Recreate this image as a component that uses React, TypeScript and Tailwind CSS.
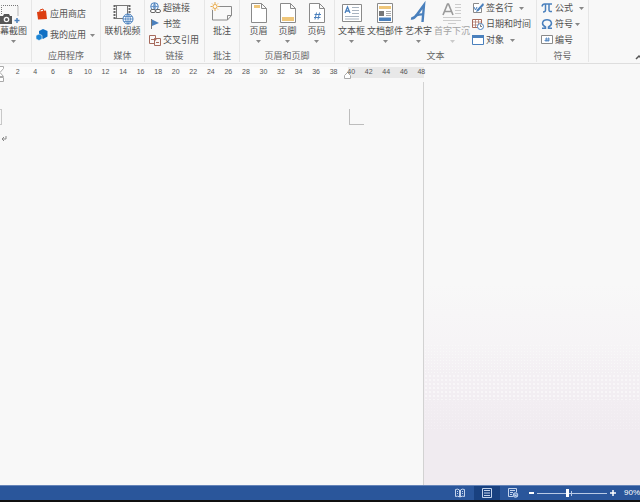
import type { ReactNode } from "react";

const BLUE = "#4a80bd";
const GREY = "#8a8a8a";
const GOLD = "#efc67a";

function Arrow({ className = "" }: { className?: string }) {
  return (
    <svg viewBox="0 0 5 3" className={`h-[3px] w-[5px] shrink-0 ${className}`} aria-hidden="true">
      <path d="M0 0h5L2.5 3z" fill="#888" />
    </svg>
  );
}

function Group({ label, className, children }: { label: string; className: string; children: ReactNode }) {
  return (
    <section aria-label={label} className={`flex h-[62px] shrink-0 flex-col border-r border-[#e6e6e6] ${className}`}>
      <div className="flex h-12 shrink-0 items-start">{children}</div>
      <div className="mt-[2px] h-3 whitespace-nowrap text-center leading-3 text-[#666]">{label}</div>
    </section>
  );
}

function Big({ label, icon, arrow = true, className = "", muted = false }: {
  label: string; icon: ReactNode; arrow?: boolean; className?: string; muted?: boolean;
}) {
  return (
    <button type="button" disabled={muted} className={`flex shrink-0 flex-col items-center pt-[1px] ${muted ? "text-[#a3a3a3]" : ""} ${className}`}>
      <svg viewBox="0 0 24 24" className="h-6 w-6 overflow-visible" fill="none" aria-hidden="true">{icon}</svg>
      <span className="whitespace-nowrap leading-3">{label}</span>
      {arrow && <Arrow className={muted ? "mt-[3px] opacity-40" : "mt-[3px]"} />}
    </button>
  );
}

function Small({ label, icon, arrow = "" }: { label: string; icon: ReactNode; arrow?: string }) {
  return (
    <button type="button" className="flex h-4 items-center gap-[2px] whitespace-nowrap">
      <svg viewBox="0 0 12 12" className="h-3 w-3 shrink-0" fill="none" aria-hidden="true">{icon}</svg>
      <span className="leading-3">{label}</span>
      {arrow && <Arrow className={arrow} />}
    </button>
  );
}

const pageOutline = <path d="M4.500 2.500h10l5 5v14h-15zM14.500 2.500v5h5" fill="#fff" stroke={GREY} />;

const icons = {
  screenshot: (
    <g transform="translate(-2 1)">
      <path d="M1.500 12V3.500h16.500V14" stroke="#777" strokeDasharray="1 1" />
      <path d="M0 14h3l1-2h5l1 2h2v8H0z" fill="#555" />
      <circle cx="6.500" cy="17.500" r="2.800" fill="#f8f8f8" />
      <circle cx="6.500" cy="17.500" r="1.500" fill="#555" />
      <path d="M17 16v5M14.500 18.500h5" stroke={BLUE} strokeWidth="1.500" />
    </g>
  ),
  video: (
    <>
      <path d="M3.500 4v14M18.500 4v10" stroke="#666" strokeWidth="2" strokeDasharray="2 1" />
      <path d="M4 4.500h14M4 17.500h8M5.500 4v14M16.500 4v9" stroke="#777" />
      <circle cx="17" cy="18" r="5" fill="#f8fbff" stroke={BLUE} />
      <path d="M12 18h10M13 15.500h8M13 20.500h8M17 13v10M17 13q-5 5 0 10M17 13q5 5 0 10" stroke={BLUE} strokeWidth=".8" />
    </>
  ),
  comment: (
    <>
      <path d="M9 5.500h12.500v9l-4 4.500h-15V9M17.500 19v-4.500h4" stroke={GREY} />
      <circle cx="5" cy="5.500" r="2" stroke="#e9aa49" fill="#fff" />
      <path d="M5 1v2M5 8v2M.5 5.500h2M7.500 5.500h2M2 2.500l1 1M7 7.500l1 1M8 2.500l-1 1M2 8.500l1-1" stroke="#e9aa49" />
    </>
  ),
  header: <>{pageOutline}<path d="M7 4h6v3H7z" fill={GOLD} /></>,
  footer: <>{pageOutline}<path d="M6 16h12v4H6z" fill={GOLD} /></>,
  pageNumber: <>{pageOutline}<path d="M11.500 11.500l-1.500 7M14.500 11.500L13 18.500M9.500 13.500h6.500M9 16.500h6.500" stroke={BLUE} /></>,
  textbox: (
    <>
      <path d="M2.500 3.500h19v17h-19z" fill="#fff" stroke={GREY} />
      <path d="M5 12l2.500-6L10 12M6 10h3" stroke={BLUE} strokeWidth="1.300" />
      <path d="M12 6.500h7M12 9.500h7M12 12.500h7M5 15.500h14M5 18h14" stroke="#a9b4c0" />
    </>
  ),
  parts: (
    <>
      <path d="M4.500 2.500h15v19h-15z" fill="#fff" stroke={GREY} />
      <path d="M6 5h12v3H6z" fill={GOLD} />
      <path d="M6 10h5v5H6z" fill="#777" />
      <path d="M13 10.500h5M13 12.500h5M13 14.500h5" stroke="#aaa" />
      <path d="M6 16.500h12V20H6z" fill={BLUE} />
    </>
  ),
  wordart: (
    <>
      <path d="M4 17.500q3 .5 6-4L17 4l-1.500 17" stroke={BLUE} strokeWidth="2.400" />
      <path d="M9 14.500q4-1.500 8-1" stroke={BLUE} strokeWidth="2" />
    </>
  ),
  dropcap: (
    <>
      <path d="M3 14L7.500 3h1L13 14M5 10.500h6" stroke="#999" strokeWidth="1.600" />
      <path d="M15 3.500h6M15 6.500h6M15 9.500h6M15 12.500h6M3 16.500h18M3 19.500h18M8 22.500h8" stroke="#ccc" />
    </>
  ),
  store: (
    <>
      <path d="M1 4l9-1.500L11 11l-9 .5z" fill="#dc3e12" />
      <path d="M4 4V2l3-1 1 2.500" stroke="#dc3e12" />
    </>
  ),
  apps: (
    <>
      <path d="M7 0l4.500 2v5.500L7 10 3 7.500V2z" fill="#1170c4" />
      <path d="M3 5l3 1.500v3.500l-3 1.500L0 10V6.500z" fill="#1b85d6" stroke="#f8f8f8" strokeWidth=".6" />
    </>
  ),
  link: (
    <>
      <circle cx="5.500" cy="4.500" r="3.800" stroke={BLUE} fill="#eef5fc" />
      <path d="M2 4.500h7M5.500 1v7M5.500 1q-3 3.500 0 7M5.500 1q3 3.500 0 7" stroke={BLUE} strokeWidth=".7" />
      <rect x="1.500" y="7.500" width="5" height="3" rx="1.500" stroke="#666" fill="#fff" />
      <rect x="6.500" y="7.500" width="5" height="3" rx="1.500" stroke="#666" fill="#fff" />
    </>
  ),
  bookmark: <><path d="M3 1.500l7 3.500-7 3z" fill={BLUE} /><path d="M2.500 1v10" stroke="#777" /></>,
  cross: (
    <>
      <path d="M5 9.500H.5v-8h6V4" stroke="#a66a5c" />
      <path d="M5.500 4.500h6v7h-6zM2 5.500h5M5.500 4l1.500 1.500L5.500 7M10 8.500H7" stroke="#a66a5c" />
    </>
  ),
  signature: (
    <>
      <path d="M7 1.500H1.500v9h8V6" fill="#fff" stroke={GREY} />
      <path d="M11 1L5 7.500l-1 2.500 2.500-1L12 3z" fill={BLUE} />
      <path d="M2 5l1.500 3L5 5" stroke={BLUE} />
    </>
  ),
  date: (
    <>
      <path d="M.5 1.500h9v8h-9z" fill="#fff" stroke="#a66a5c" />
      <path d="M.5 4h9M3.500 2v7M6.500 2v7M.5 7h9" stroke="#a66a5c" strokeWidth=".7" />
      <circle cx="8.500" cy="8.500" r="3" fill="#fff" stroke={BLUE} />
      <path d="M8.500 6.500v2H10" stroke="#555" strokeWidth=".8" />
    </>
  ),
  object: <><path d="M.5 1.500h11v9H.5z" fill="#fff" stroke={BLUE} /><path d="M0 1h12v3H0z" fill={BLUE} /></>,
  pi: <path d="M1 4.500Q1.500 2 3.500 2H11M4.500 2.500v5.500q0 2-2.500 2M8 2.500V8q0 2 3 1.500" stroke={BLUE} strokeWidth="1.500" />,
  omega: <path d="M1 10.200h3.500V9C-.5 6.500 1.500 1.700 6 1.700S12.500 6.500 7.500 9v1.200H11" stroke={BLUE} strokeWidth="1.500" />,
  number: <><path d="M.5 1.500h11v8H.5z" fill="#fff" stroke={GREY} /><path d="M5.500 3.500L5 8M7.500 3.500L7 8M4 5h5M3.500 6.500h5" stroke={BLUE} strokeWidth=".8" /></>,
};

function Ribbon() {
  return (
    <div role="toolbar" aria-label="插入" className="flex h-16 shrink-0 items-start overflow-hidden border-b border-[#dedede]">
      <section className="flex h-[62px] w-8 shrink-0 items-start border-r border-[#e6e6e6]">
        <Big label="幕截图" icon={icons.screenshot} />
      </section>
      <Group label="应用程序" className="w-[69px]">
        <div className="flex flex-col gap-[5px] pl-1 pt-[6px]">
          <Small label="应用商店" icon={icons.store} />
          <Small label="我的应用" icon={icons.apps} arrow="ml-[2px]" />
        </div>
      </Group>
      <Group label="媒体" className="w-11">
        <Big label="联机视频" icon={icons.video} arrow={false} className="w-full" />
      </Group>
      <Group label="链接" className="w-[60px]">
        <div className="flex flex-col pl-1">
          <Small label="超链接" icon={icons.link} />
          <Small label="书签" icon={icons.bookmark} />
          <Small label="交叉引用" icon={icons.cross} />
        </div>
      </Group>
      <Group label="批注" className="w-[35px]">
        <Big label="批注" icon={icons.comment} arrow={false} className="w-full" />
      </Group>
      <Group label="页眉和页脚" className="w-[95px]">
        <div className="flex pl-1">
          <Big label="页眉" icon={icons.header} className="w-[29px]" />
          <Big label="页脚" icon={icons.footer} className="w-[29px]" />
          <Big label="页码" icon={icons.pageNumber} className="w-[29px]" />
        </div>
      </Group>
      <Group label="文本" className="w-[202px]">
        <Big label="文本框" icon={icons.textbox} className="w-[33px]" />
        <Big label="文档部件" icon={icons.parts} className="w-[34px]" />
        <Big label="艺术字" icon={icons.wordart} className="w-[33px]" />
        <Big label="首字下沉" icon={icons.dropcap} className="w-[34px]" muted />
        <div className="flex flex-col pl-[3px]">
          <Small label="签名行" icon={icons.signature} arrow="ml-1" />
          <Small label="日期和时间" icon={icons.date} />
          <Small label="对象" icon={icons.object} arrow="ml-1" />
        </div>
      </Group>
      <Group label="符号" className="w-[52px]">
        <div className="flex flex-col pl-1">
          <Small label="公式" icon={icons.pi} arrow="ml-1" />
          <Small label="符号" icon={icons.omega} arrow="ml-0" />
          <Small label="编号" icon={icons.number} />
        </div>
      </Group>
      <button type="button" aria-label="折叠功能区" className="-mr-[3px] ml-auto mt-[54px]">
        <svg viewBox="0 0 8 6" className="h-[6px] w-2" fill="none"><path d="M1 5l3-3 3 3" stroke="#555" strokeWidth="1.500" /></svg>
      </button>
    </div>
  );
}

const marks = Array.from({ length: 24 }, (_, i) => (i + 1) * 2);

function Ruler() {
  return (
    <div className="relative flex h-4 w-[424px] shrink-0 items-center bg-[linear-gradient(to_right,#fbfbfb_348px,#e8e8e8_348px)] bg-[length:100%_11px] bg-[position:0_3px] bg-no-repeat">
      <svg viewBox="0 0 5 18" className="absolute left-0 top-[1px] h-[18px] w-[5px]" fill="none" aria-hidden="true">
        <path d="M0 1.500h3.500v2L0 7.500l3.500 4H0M0 12.500h3.500v4H0" fill="#fff" stroke="#aaa" />
      </svg>
      <svg viewBox="0 0 7 7" className="absolute left-[344px] top-2 h-[7px] w-[7px]" aria-hidden="true">
        <path d="M.5 6.500v-3l3-3 3 3v3z" fill="#fff" stroke="#aaa" />
      </svg>
      <div className="-mr-[6px] ml-[9px] flex min-w-0 flex-1 text-[7px] text-[#555]">
        {marks.map((m) => (
          <span key={m} className="relative flex flex-1 basis-0 justify-center font-['Liberation_Sans',Arial,sans-serif] leading-4">{m}</span>
        ))}
      </div>
    </div>
  );
}

function StatusBar() {
  return (
    <footer className="flex h-[17px] shrink-0 items-stretch overflow-hidden border-b-2 border-t border-b-[#101010] border-t-[#6685b9] bg-[#2a569b] text-white">
      <div className="ml-auto flex shrink-0 items-stretch">
        <button type="button" aria-label="阅读视图" className="flex w-[27px] items-center justify-center">
          <svg viewBox="0 0 12 10" className="h-[10px] w-3" fill="none" stroke="#c3d3ec">
            <path d="M1.500 1.500Q4 .5 5.500 2v7Q4 7.500 1.500 8.500zM10.500 1.500Q8 .5 6.500 2v7q1.500-1.500 4-.5zM3 3.500h1M3 5.500h1M8 3.500h1M8 5.500h1" />
          </svg>
        </button>
        <button type="button" aria-label="页面视图" className="flex w-[26px] items-center justify-center bg-[#194180]">
          <svg viewBox="0 0 12 10" className="h-[10px] w-3" fill="none" stroke="#c3d3ec">
            <path d="M1.500.5h9v9h-9zM3 2.500h6M3 5h6M3 7.500h6" />
          </svg>
        </button>
        <button type="button" aria-label="Web 版式视图" className="flex w-[27px] items-center justify-center">
          <svg viewBox="0 0 12 10" className="h-[10px] w-3" fill="none" stroke="#c3d3ec">
            <path d="M6 8.500H1.500v-8h8V4M3 2.500h5M3 4.500h3M3 6.500h2" />
            <circle cx="8.500" cy="7" r="2.300" fill="#6f94cc" /><path d="M6.500 6.500l4 2" />
          </svg>
        </button>
        <button type="button" aria-label="缩小" className="flex w-[10px] items-center justify-center"><span className="h-[2px] w-[5px] bg-white" /></button>
        <input
          type="range" min={10} max={200} defaultValue={92} aria-label="显示比例"
          className="my-auto h-[10px] w-[70px] appearance-none bg-[linear-gradient(#b9cae5,#b9cae5),linear-gradient(#b9cae5,#b9cae5)] bg-[length:100%_1px,1px_5px] bg-center bg-no-repeat [&::-webkit-slider-thumb]:h-[8px] [&::-webkit-slider-thumb]:w-[3px] [&::-webkit-slider-thumb]:appearance-none [&::-webkit-slider-thumb]:bg-white"
        />
        <button type="button" aria-label="放大" className="flex w-3 items-center justify-center">
          <svg viewBox="0 0 6 6" className="h-[6px] w-[6px]"><path d="M3 0v6M0 3h6" stroke="#fff" strokeWidth="1.500" /></svg>
        </button>
        <button type="button" className="ml-[5px] shrink-0 font-['Liberation_Sans',Arial,sans-serif] text-[8px] leading-[14px]">90%</button>
      </div>
    </footer>
  );
}

export default function App() {
  return (
    <div className="flex min-h-screen flex-col overflow-hidden bg-[#f8f8f8] font-['Noto_Sans_CJK_SC',sans-serif] text-[9px] text-[#505050]">
      <Ribbon />
      <main className="flex flex-1 flex-col">
        <Ruler />
        <div className="flex flex-1 pt-[2px]">
          <article className="w-[424px] shrink-0 border-r border-[#d2d2d2] pt-[27px]">
            <div className="flex h-4">
              <span className="w-[2px] border-y border-r border-[#c8c8c8]" />
              <span className="ml-[347px] w-[15px] border-b border-l border-[#bdbdbd]" />
            </div>
            <p className="mt-[10px] pl-[1px]">
              <svg viewBox="0 0 6 7" className="h-[7px] w-[6px]" fill="none" aria-hidden="true">
                <path d="M5 1v3H1M3 2L1 4l2 2" stroke="#888" />
              </svg>
            </p>
          </article>
          <aside className="flex flex-1 flex-col justify-end bg-[linear-gradient(#f8f8f8_50%,#f6f4f6_65%,#f3eff3_73%,#f0ebf0_87%)] pb-[55px]">
            <div className="h-[30px] bg-[radial-gradient(#f8f8f8_1px,transparent_1px)] bg-[length:3px_3px]" />
            <div className="h-[26px] bg-[radial-gradient(#f8f6f8_1px,transparent_1px)] bg-[length:4px_4px]" />
            <div className="h-[30px] bg-[radial-gradient(#f4f0f4_1px,transparent_1px)] bg-[length:3px_3px]" />
          </aside>
        </div>
      </main>
      <StatusBar />
    </div>
  );
}
